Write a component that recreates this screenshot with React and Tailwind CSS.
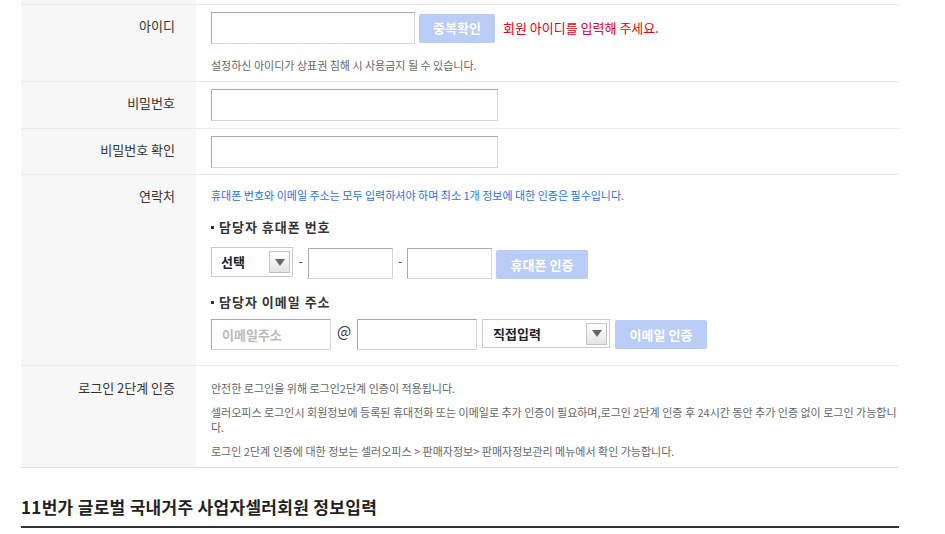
const inputCls =
  'block bg-white border border-[#d6d6d6] border-t-[#a9a9a9] border-l-[#a9a9a9]';
const btnCls =
  'flex items-center justify-center rounded-[2px] bg-[#b9cdf7] text-white text-[13px] font-bold';

const Arrow = () => (
  <span className="flex h-[22px] w-[21px] items-center justify-center border border-[#c4c4c4] bg-linear-to-b from-white to-[#e4e4e4]">
    <span className="h-0 w-0 border-x-[5px] border-t-[7px] border-x-transparent border-t-[#666]" />
  </span>
);

const Select = ({ label, className }) => (
  <div
    className={`flex items-center justify-between border border-[#cbcbcb] bg-white pr-[2px] text-[13px] font-bold text-[#222] ${className}`}
  >
    <span>{label}</span>
    <Arrow />
  </div>
);

const Row = ({ label, labelTop = 'pt-[12px]', border = 'border-[#ebebeb]', children }) => (
  <div className={`flex border-t ${border}`}>
    <div
      className={`w-[175px] shrink-0 bg-[#f7f7f7] pr-[21px] text-right text-[13px] leading-[18px] text-[#333] ${labelTop}`}
    >
      {label}
    </div>
    <div className="flex-1 pl-[15px]">{children}</div>
  </div>
);

const SubTitle = ({ children, className }) => (
  <div className={`flex items-center text-[13px] font-bold leading-[18px] tracking-[1px] text-[#333] ${className}`}>
    <span className="mr-[5px] h-[3px] w-[3px] bg-[#333]" />
    {children}
  </div>
);

export default function App() {
  return (
    <div className="min-h-[534px] bg-white font-['Noto_Sans_CJK_KR','Noto_Sans',sans-serif]">
      <div className="ml-[21px] w-[878px]">
        <div className="flex h-[4px]">
          <div className="w-[175px] bg-[#f7f7f7]" />
        </div>

        <Row label="아이디">
          <div className="pt-[7px] pb-[8px]">
            <div className="flex items-center">
              <div className={`${inputCls} h-[32px] w-[204px]`} />
              <button type="button" className={`${btnCls} ml-[4px] h-[29px] w-[76px]`}>
                중복확인
              </button>
              <span className="ml-[8px] text-[13px] text-[#e60012]">회원 아이디를 입력해 주세요.</span>
            </div>
            <p className="mt-[13px] text-[11px] leading-[16px] text-[#666]">
              설정하신 아이디가 상표권 침해 시 사용금지 될 수 있습니다.
            </p>
          </div>
        </Row>

        <Row label="비밀번호">
          <div className="pt-[7px] pb-[7px]">
            <div className={`${inputCls} h-[32px] w-[287px]`} />
          </div>
        </Row>

        <Row label="비밀번호 확인">
          <div className="pt-[7px] pb-[6px]">
            <div className={`${inputCls} h-[32px] w-[287px]`} />
          </div>
        </Row>

        <Row label="연락처">
          <div className="pt-[12px] pb-[15px]">
            <p className="text-[11px] leading-[16px] text-[#2f6fe4]">
              휴대폰 번호와 이메일 주소는 모두 입력하셔야 하며 최소 1개 정보에 대한 인증은 필수입니다.
            </p>
            <SubTitle className="mt-[15px]">담당자 휴대폰 번호</SubTitle>
            <div className="mt-[11px] flex h-[32px] items-start">
              <Select label="선택" className="h-[30px] w-[82px] pl-[9px]" />
              <span className="w-[15px] pt-[5px] text-center text-[12px] text-[#333]">-</span>
              <div className={`${inputCls} mt-[1px] h-[31px] w-[85px]`} />
              <span className="w-[14px] pt-[5px] text-center text-[12px] text-[#333]">-</span>
              <div className={`${inputCls} mt-[1px] h-[31px] w-[85px]`} />
              <button type="button" className={`${btnCls} mt-[3px] ml-[4px] h-[29px] w-[92px]`}>
                휴대폰 인증
              </button>
            </div>
            <SubTitle className="mt-[14px]">담당자 이메일 주소</SubTitle>
            <div className="mt-[8px] flex h-[31px] items-start">
              <div className={`${inputCls} flex h-[31px] w-[120px] items-center pl-[10px] text-[13px] font-bold text-[#bbb]`}>
                이메일주소
              </div>
              <span className="w-[26px] pt-[2px] text-center text-[15px] leading-[20px] text-[#333]">@</span>
              <div className={`${inputCls} h-[31px] w-[120px]`} />
              <Select label="직접입력" className="ml-[5px] h-[29px] w-[128px] pl-[10px]" />
              <button type="button" className={`${btnCls} mt-[1px] ml-[5px] h-[29px] w-[92px]`}>
                이메일 인증
              </button>
            </div>
          </div>
        </Row>

        <Row label="로그인 2단계 인증" labelTop="pt-[13px]">
          <div className="pt-[15px] pb-[8px] pr-[4px] text-[11px] leading-[15px] text-[#666]">
            <p>안전한 로그인을 위해 로그인2단계 인증이 적용됩니다.</p>
            <p className="mt-[9px] whitespace-nowrap">
              셀러오피스 로그인시 회원정보에 등록된 휴대전화 또는 이메일로 추가 인증이 필요하며,로그인 2단계 인증 후 24시간 동안 추가 인증 없이 로그인 가능합니
              <br />
              다.
            </p>
            <p className="mt-[9px]">로그인 2단계 인증에 대한 정보는 셀러오피스 &gt; 판매자정보&gt; 판매자정보관리 메뉴에서 확인 가능합니다.</p>
          </div>
        </Row>

        <div className="border-t border-[#dddddd] pt-[27px] pb-[7px]">
          <h2 className="text-[17px] font-bold leading-[24px] tracking-[0.3px] text-[#222]">
            11번가 글로벌 국내거주 사업자셀러회원 정보입력
          </h2>
        </div>
        <div className="h-[2px] bg-[#333]" />
      </div>
    </div>
  );
}
